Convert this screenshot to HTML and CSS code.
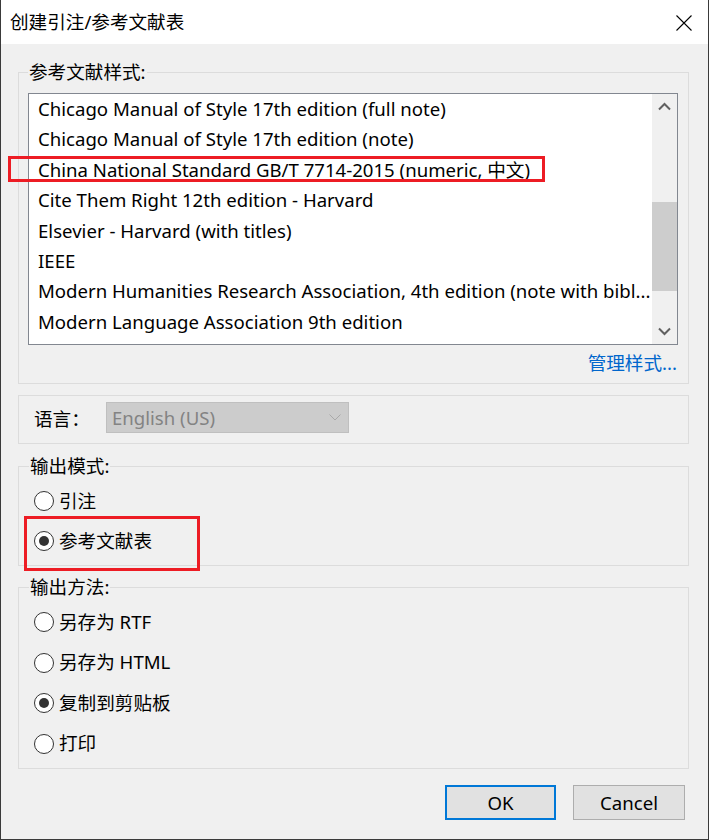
FILE: index.html
```html
<!DOCTYPE html>
<html lang="zh-CN">
<head>
<meta charset="utf-8">
<title>创建引注/参考文献表</title>
<link rel="stylesheet" href="styles.css">
</head>
<body>
<div class="window">
  <div class="titlebar">
    <span class="title">创建引注/参考文献表</span>
    <span class="close"><svg width="16" height="16" viewBox="0 0 16 16"><path d="M0.5 0.5 L15.5 15.5 M15.5 0.5 L0.5 15.5" stroke="#000" stroke-width="1.1" fill="none"/></svg></span>
  </div>
  <div class="content">
    <fieldset class="group g-style">
      <legend>参考文献样式:</legend>
      <div class="listbox">
        <ul class="items">
          <li>Chicago Manual of Style 17th edition (full note)</li>
          <li>Chicago Manual of Style 17th edition (note)</li>
          <li class="marked">China National Standard GB/T 7714-2015 (numeric, 中文)<span class="annot annot-list"></span></li>
          <li>Cite Them Right 12th edition - Harvard</li>
          <li>Elsevier - Harvard (with titles)</li>
          <li>IEEE</li>
          <li>Modern Humanities Research Association, 4th edition (note with bibl...</li>
          <li>Modern Language Association 9th edition</li>
        </ul>
        <div class="scrollbar">
          <span class="arrow"><svg width="13" height="9" viewBox="0 0 13 9"><polyline points="1,7.5 6.5,2 12,7.5" fill="none" stroke="#606060" stroke-width="2"/></svg></span>
          <div class="track"><div class="thumb"></div></div>
          <span class="arrow"><svg width="13" height="9" viewBox="0 0 13 9"><polyline points="1,1.5 6.5,7 12,1.5" fill="none" stroke="#606060" stroke-width="2"/></svg></span>
        </div>
      </div>
      <div class="link-row"><a class="manage">管理样式...</a></div>
    </fieldset>

    <fieldset class="group g-lang">
      <span class="lang-label">语言：</span>
      <div class="combo">
        <span>English (US)</span>
        <svg width="12" height="7" viewBox="0 0 12 7"><polyline points="0.5,0.5 6,6 11.5,0.5" fill="none" stroke="#a9a9a9" stroke-width="1"/></svg>
      </div>
    </fieldset>

    <fieldset class="group g-mode">
      <legend>输出模式:</legend>
      <div class="radio"><span class="circle"></span><span class="label">引注</span></div>
      <div class="radio checked"><span class="circle"></span><span class="label">参考文献表</span><span class="annot annot-radio"></span></div>
    </fieldset>

    <fieldset class="group g-method">
      <legend>输出方法:</legend>
      <div class="radio"><span class="circle"></span><span class="label">另存为 RTF</span></div>
      <div class="radio"><span class="circle"></span><span class="label">另存为 HTML</span></div>
      <div class="radio checked"><span class="circle"></span><span class="label">复制到剪贴板</span></div>
      <div class="radio"><span class="circle"></span><span class="label">打印</span></div>
    </fieldset>
  </div>
  <div class="buttons">
    <button class="btn btn-default">OK</button>
    <button class="btn">Cancel</button>
  </div>
</div>
</body>
</html>
```

FILE: styles.css
```css
html, body {
  margin: 0;
  padding: 0;
}

body {
  font-family: "Noto Sans", "Noto Sans CJK SC", sans-serif;
  font-size: 18.6px;
  color: #000;
}

.window {
  width: 709px;
  height: 840px;
  box-sizing: border-box;
  background: #f0f0f0;
  border: 1px solid #3a3a3a;
  border-top: none;
  display: flex;
  flex-direction: column;
}

.titlebar {
  height: 44px;
  flex-shrink: 0;
  background: #fff;
  display: flex;
  align-items: center;
  justify-content: space-between;
  padding: 0 16px 0 9px;
}

.title {
  line-height: 24px;
}

.close {
  display: flex;
  margin-top: 1px;
}

.content {
  padding: 16px 19px 0 17px;
  display: flex;
  flex-direction: column;
}

.group {
  margin: 0;
  border: 1px solid #dcdcdc;
  min-width: 0;
}

.group legend {
  padding: 0 1px;
  line-height: 24px;
}

/* style group */
.g-style {
  padding: 9px 10px 8px 9px;
}

.listbox {
  height: 252px;
  box-sizing: border-box;
  border: 1px solid #828790;
  background: #fff;
  display: flex;
}

.items {
  flex: 1;
  min-width: 0;
  list-style: none;
  margin: 0;
  padding: 0 0 0 9px;
}

.items li {
  line-height: 30.4px;
  white-space: nowrap;
  position: relative;
}

.annot {
  position: absolute;
  border: 3px solid #ed1c24;
  box-sizing: border-box;
  pointer-events: none;
}

.annot-list {
  left: -30px;
  top: 1px;
  width: 537px;
  height: 26px;
}

.scrollbar {
  width: 25px;
  background: #f0f0f0;
  display: flex;
  flex-direction: column;
}

.arrow {
  height: 25px;
  display: flex;
  align-items: center;
  justify-content: center;
}

.track {
  flex: 1;
}

.thumb {
  margin-top: 83px;
  height: 89px;
  background: #cdcdcd;
}

.link-row {
  margin-top: 6px;
  line-height: 24px;
  text-align: right;
  padding-right: 1px;
}

.manage {
  color: #0066cc;
  cursor: pointer;
}

/* language group */
.g-lang {
  margin-top: 11px;
  padding: 6px 10px 10px 15px;
  display: flex;
  align-items: center;
}

.lang-label {
  width: 72px;
}

.combo {
  width: 243px;
  height: 31px;
  box-sizing: border-box;
  background: #cccccc;
  border: 1px solid #bfbfbf;
  color: #838383;
  display: flex;
  align-items: center;
  justify-content: space-between;
  padding: 0 7px 0 5px;
}

/* radio groups */
.g-mode {
  margin-top: 10px;
  padding: 3px 10px 4px 10px;
}

.g-method {
  margin-top: 9px;
  padding: 3px 10px 4px 10px;
}

.radio {
  height: 40px;
  margin-left: 5px;
  display: flex;
  align-items: center;
  gap: 5px;
  position: relative;
}

.radio .label {
  padding-bottom: 4px;
}

.g-method .radio {
  height: 40.5px;
}

.circle {
  width: 20px;
  height: 20px;
  box-sizing: border-box;
  border: 1px solid #333;
  border-radius: 50%;
  background: #fff;
  display: flex;
  align-items: center;
  justify-content: center;
  flex-shrink: 0;
}

.radio.checked .circle::after {
  content: "";
  width: 10px;
  height: 10px;
  border-radius: 50%;
  background: #333;
}

.annot-radio {
  left: -10px;
  top: -5px;
  width: 176px;
  height: 55px;
}

/* buttons */
.buttons {
  margin-top: 16px;
  display: flex;
  justify-content: flex-end;
  gap: 17px;
  padding-right: 23px;
}

.btn {
  height: 35px;
  box-sizing: border-box;
  background: #e1e1e1;
  border: 1px solid #adadad;
  font-family: inherit;
  font-size: 18.6px;
  color: #000;
  padding: 0;
  width: 112px;
}

.btn-default {
  width: 111px;
  border: 2px solid #0078d7;
}
```
